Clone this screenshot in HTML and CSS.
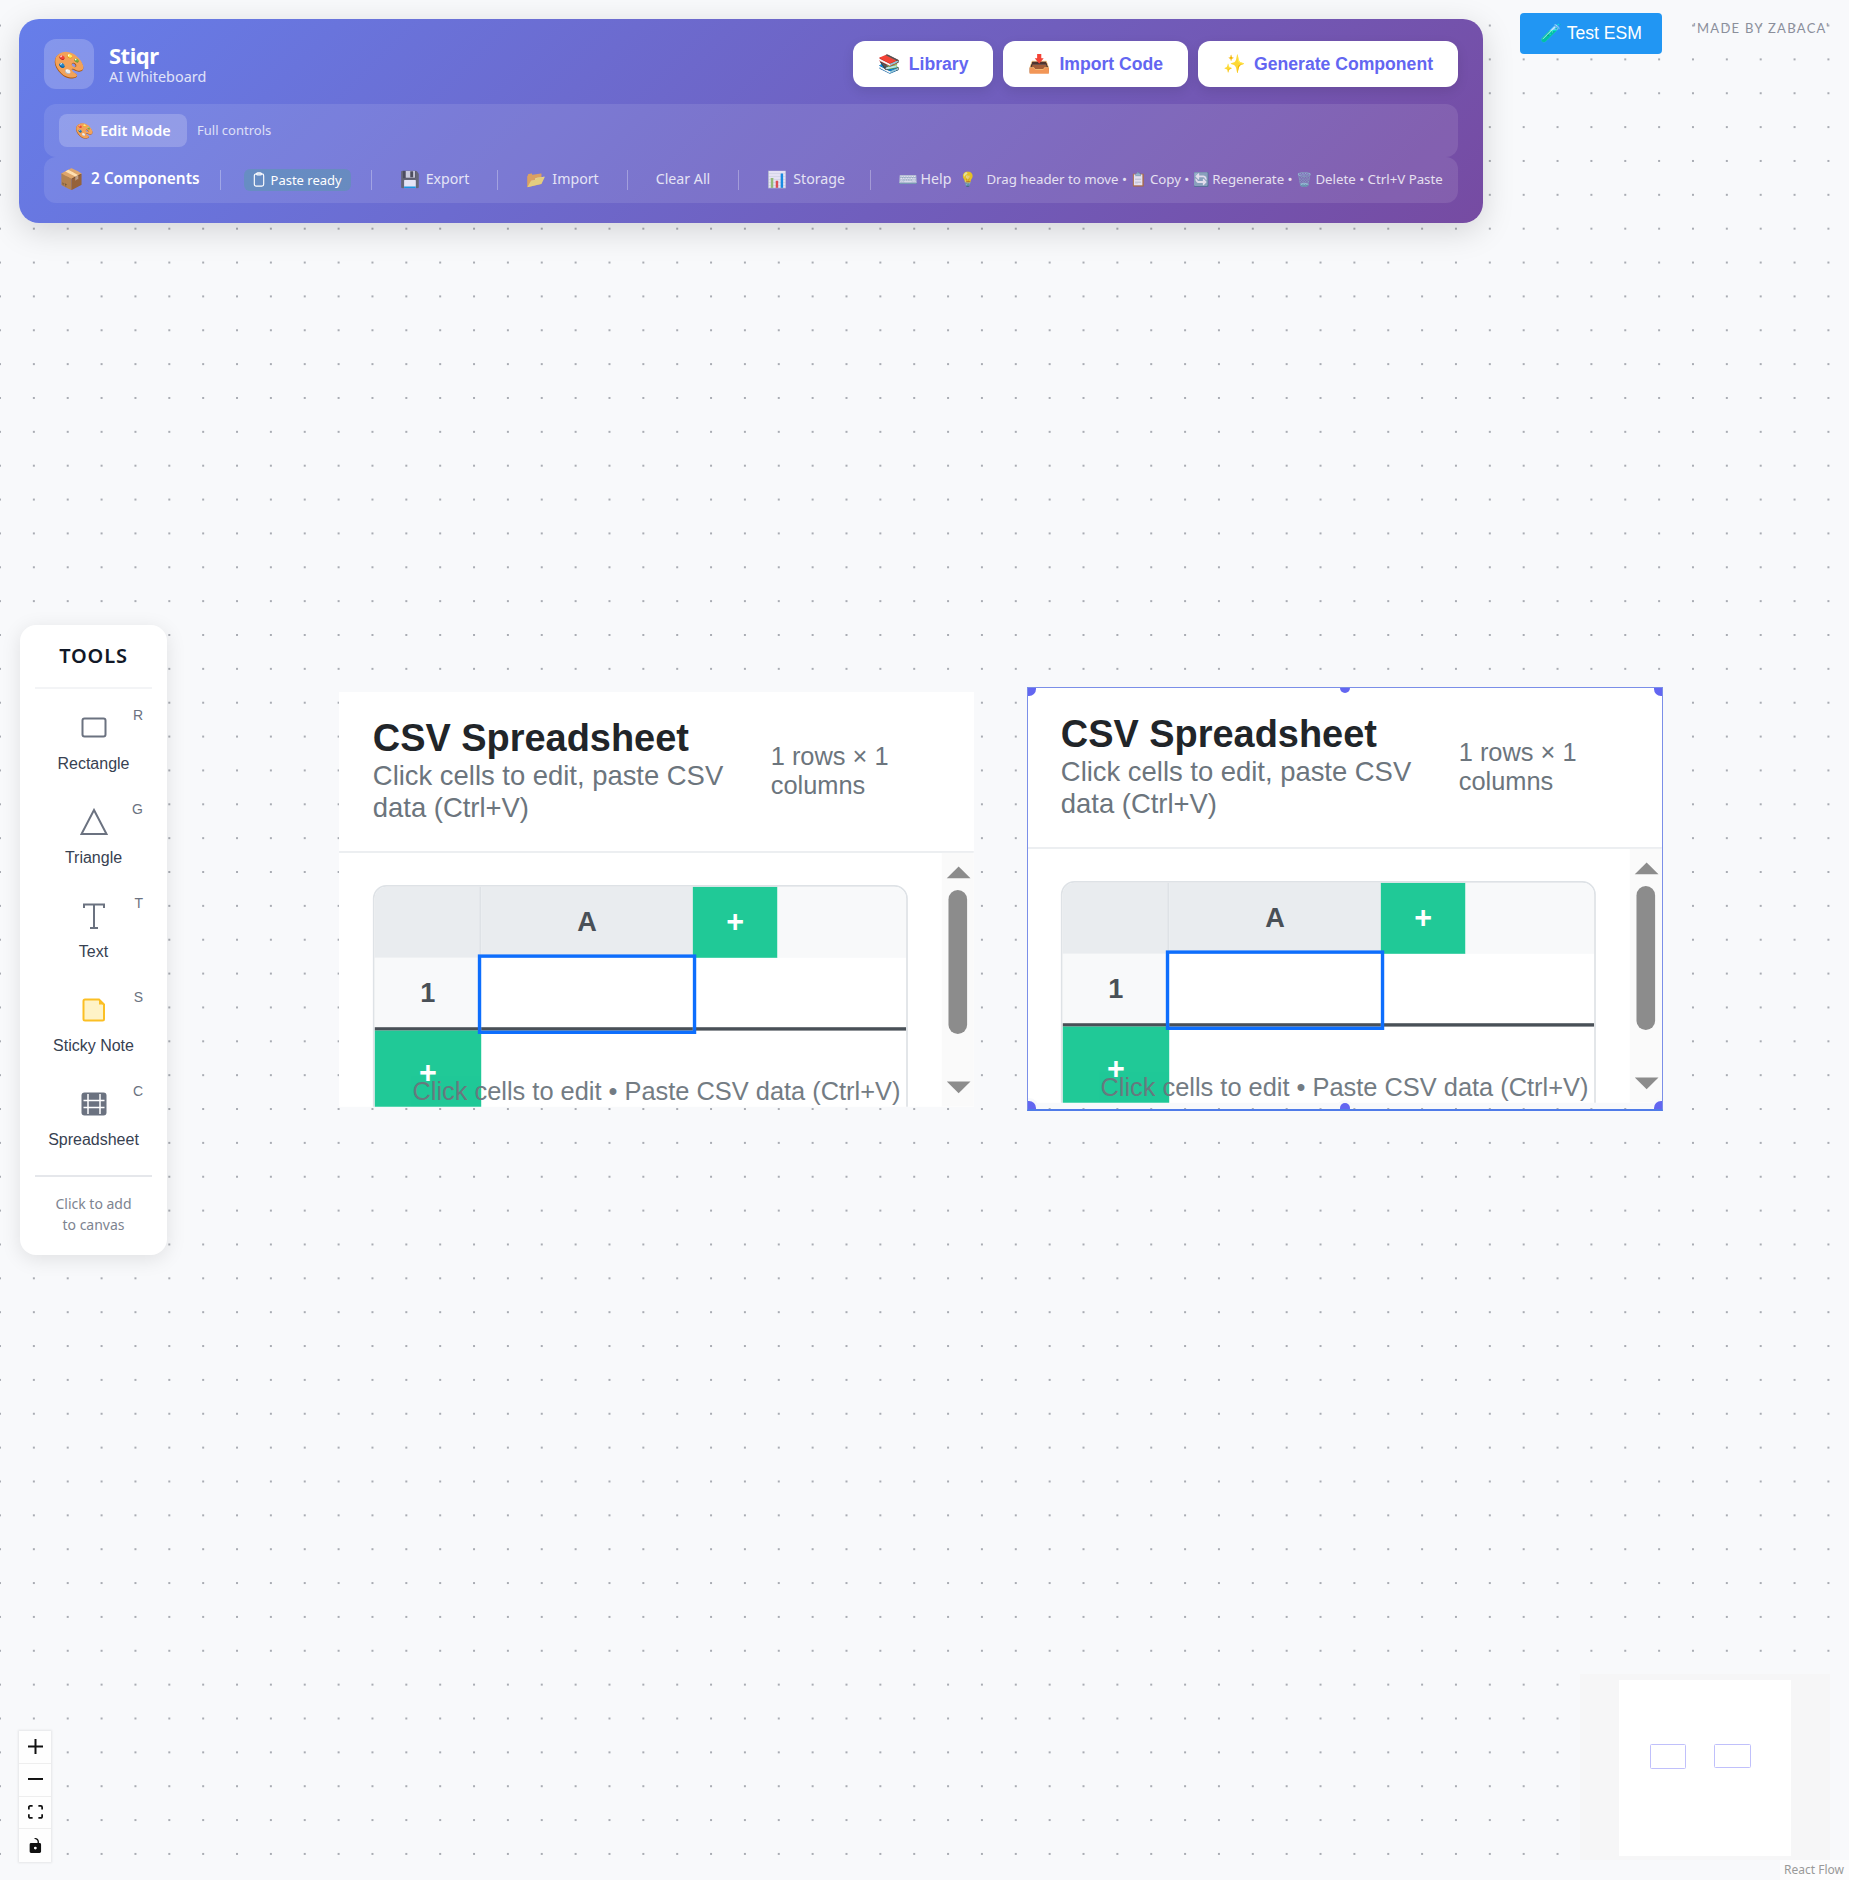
FILE: index.html
```html
<!DOCTYPE html>
<html lang="en">
<head>
  <meta charset="UTF-8" />
  <title>Stiqr - AI Whiteboard</title>
  <link rel="stylesheet" href="styles.css">
</head>
<body>
<div class="canvas">

  <header class="app-header">
    <div class="top-row">
      <div class="brand">
        <div class="logo">🎨</div>
        <div class="brand-text">
          <div class="brand-name">Stiqr</div>
          <div class="brand-sub">AI Whiteboard</div>
        </div>
      </div>
      <div class="actions">
        <button class="action"><span class="emoji">📚</span>Library</button>
        <button class="action"><span class="emoji">📥</span>Import Code</button>
        <button class="action"><span class="emoji">✨</span>Generate Component</button>
      </div>
    </div>
    <div class="mode-row">
      <span class="mode-pill"><span class="mode-emoji">🎨</span>Edit Mode</span>
      <span class="mode-note">Full controls</span>
    </div>
    <div class="status-row">
      <span class="count"><span class="count-emoji">📦</span>2 Components</span>
      <span class="sep"></span>
      <span class="paste-pill">
        <svg class="clip" viewBox="0 0 12 16"><rect x="1" y="2" width="10" height="13" rx="2"/><rect x="3.5" y="0.8" width="5" height="2.4" rx="1"/></svg>
        Paste ready
      </span>
      <span class="sep"></span>
      <span class="link"><span class="link-emoji">💾</span>Export</span>
      <span class="sep"></span>
      <span class="link"><span class="link-emoji">📂</span>Import</span>
      <span class="sep"></span>
      <span class="link">Clear All</span>
      <span class="sep"></span>
      <span class="link storage"><span class="link-emoji">📊</span>Storage</span>
      <span class="sep"></span>
      <span class="link help"><span class="link-emoji">⌨️</span>Help</span>
      <span class="tips"><span class="tip-bulb">💡</span>Drag header to move • 📋 Copy • 🔄 Regenerate • 🗑️ Delete • Ctrl+V Paste</span>
    </div>
  </header>

  <button class="test-esm">🧪 Test ESM</button>
  <div class="made-by">'MADE BY ZABACA'</div>

  <aside class="tools">
    <h3 class="tools-title">TOOLS</h3>
    <div class="tool">
      <svg class="tool-icon" viewBox="0 0 28 28"><rect x="2.5" y="4.5" width="23" height="18" rx="2"/></svg>
      <span class="tool-label">Rectangle</span><span class="hotkey">R</span>
    </div>
    <div class="tool">
      <svg class="tool-icon" viewBox="0 0 28 28"><path d="M14 2 L26.5 26 H1.5 Z"/></svg>
      <span class="tool-label">Triangle</span><span class="hotkey">G</span>
    </div>
    <div class="tool">
      <svg class="tool-icon" viewBox="0 0 28 28"><path d="M4 6V2.5H24V6M14 2.5V26M10 26H18"/></svg>
      <span class="tool-label">Text</span><span class="hotkey">T</span>
    </div>
    <div class="tool">
      <svg class="tool-icon sticky" viewBox="0 0 28 28"><path d="M5 3.5H19L24 8.5V23A1.5 1.5 0 0 1 22.500 24.500H5A1.500 1.500 0 0 1 3.500 23V5A1.500 1.500 0 0 1 5 3.500Z"/><path class="fold" d="M19 3.500L24 8.500H19Z"/></svg>
      <span class="tool-label">Sticky Note</span><span class="hotkey">S</span>
    </div>
    <div class="tool">
      <svg class="tool-icon grid-icon" viewBox="0 0 28 28"><rect x="1.500" y="2.500" width="25" height="23" rx="3"/><path d="M3.500 10.500H24.500M3.500 17.500H24.500M8 4V24M20 4V24"/></svg>
      <span class="tool-label">Spreadsheet</span><span class="hotkey">C</span>
    </div>
    <p class="tools-hint">Click to add<br>to canvas</p>
  </aside>

  <section class="node node-one">
    <div class="sheet-head">
      <div class="sheet-info">
        <h2>CSV Spreadsheet</h2>
        <p>Click cells to edit, paste CSV data (Ctrl+V)</p>
      </div>
      <div class="sheet-size">1 rows × 1 columns</div>
    </div>
    <div class="sheet-body">
      <div class="table">
        <div class="cell corner"></div>
        <div class="cell col-head">A</div>
        <div class="cell add">+</div>
        <div class="cell head-rest"></div>
        <div class="cell row-head">1</div>
        <div class="cell selected"></div>
        <div class="cell row-rest"></div>
        <div class="cell add add-row">+</div>
      </div>
      <div class="scrollbar"><i class="arrow-up"></i><b class="thumb"></b><i class="arrow-down"></i></div>
    </div>
    <div class="sheet-foot">Click cells to edit • Paste CSV data (Ctrl+V)</div>
  </section>

  <section class="node node-two">
    <div class="sheet-head">
      <div class="sheet-info">
        <h2>CSV Spreadsheet</h2>
        <p>Click cells to edit, paste CSV data (Ctrl+V)</p>
      </div>
      <div class="sheet-size">1 rows × 1 columns</div>
    </div>
    <div class="sheet-body">
      <div class="table">
        <div class="cell corner"></div>
        <div class="cell col-head">A</div>
        <div class="cell add">+</div>
        <div class="cell head-rest"></div>
        <div class="cell row-head">1</div>
        <div class="cell selected"></div>
        <div class="cell row-rest"></div>
        <div class="cell add add-row">+</div>
      </div>
      <div class="scrollbar"><i class="arrow-up"></i><b class="thumb"></b><i class="arrow-down"></i></div>
    </div>
    <div class="sheet-foot">Click cells to edit • Paste CSV data (Ctrl+V)</div>
  </section>

  <div class="selection">
    <i class="handle tl"></i><i class="handle tm"></i><i class="handle tr"></i>
    <i class="handle bl"></i><i class="handle bm"></i><i class="handle br"></i>
  </div>

  <div class="controls">
    <button class="ctrl"><svg viewBox="0 0 32 32"><path d="M32 18.133H18.133V32h-4.266V18.133H0v-4.266h13.867V0h4.266v13.867H32z"/></svg></button>
    <button class="ctrl"><svg viewBox="0 0 32 5"><path d="M0 0h32v4.200H0z"/></svg></button>
    <button class="ctrl"><svg viewBox="0 0 32 30"><path d="M3.692 4.630c0-.530.400-.938.939-.938h5.215V0H4.708C2.130 0 0 2.054 0 4.630v5.216h3.692V4.631zM27.354 0h-5.200v3.692h5.170c.530 0 .984.400.984.939v5.215H32V4.631A4.624 4.624 0 0027.354 0zm.954 24.830c0 .532-.400.940-.939.940h-5.215v3.768h5.215c2.577 0 4.631-2.130 4.631-4.707v-5.139h-3.692v5.139zm-23.677.940c-.531 0-.939-.400-.939-.940v-5.138H0v5.139c0 2.577 2.130 4.707 4.708 4.707h5.138V25.770H4.631z"/></svg></button>
    <button class="ctrl"><svg viewBox="0 0 25 32"><path d="M21.333 10.667H19.810V7.619C19.810 3.429 16.380 0 12.190 0c-4.114 0-1.370 2.133.305 2.438 1.676.305 4.420 2.590 4.420 5.181v3.048H3.047A3.056 3.056 0 000 13.714v15.238A3.056 3.056 0 003.048 32h18.285a3.056 3.056 0 003.048-3.048V13.714a3.056 3.056 0 00-3.048-3.047zM12.190 24.533a3.056 3.056 0 01-3.047-3.047 3.056 3.056 0 013.047-3.048 3.056 3.056 0 013.048 3.048 3.056 3.056 0 01-3.048 3.047z"/></svg></button>
  </div>

  <div class="minimap">
    <svg viewBox="0 0 250 186">
      <rect class="mask" x="39" y="6" width="172" height="176"/>
      <rect class="mini-node" x="70.500" y="70.500" width="35" height="24" rx="1"/>
      <rect class="mini-node" x="134.500" y="70.500" width="36" height="23" rx="1"/>
    </svg>
  </div>
  <div class="attribution">React Flow</div>

</div>
</body>
</html>
```

FILE: styles.css
```css
* { box-sizing: border-box; }
html, body { margin: 0; padding: 0; }
body { font-family: "Liberation Sans", Arial, sans-serif; background: #f8f9fb; }
button { font-family: "Liberation Sans", Arial, sans-serif; border: none; cursor: pointer; }

.canvas {
  position: relative;
  width: 1849px;
  height: 1880px;
  overflow: hidden;
  background-color: #f8f9fb;
  background-image: radial-gradient(circle, #a9acb3 1.1px, transparent 1.4px);
  background-size: 33.86px 33.86px;
  background-position: -16.93px 8.6px;
}

/* header */
.app-header {
  position: absolute;
  left: 19px;
  top: 19px;
  width: 1464px;
  height: 204px;
  padding: 20px 25px;
  border-radius: 20px;
  color: white;
  background: linear-gradient(135deg, #667eea 0%, #764ba2 100%);
  box-shadow: 0 8px 32px rgba(0,0,0,0.15);
  font-family: "Noto Sans", sans-serif;
}
.top-row { display: flex; justify-content: space-between; align-items: center; height: 50px; margin-bottom: 15px; }
.brand { display: flex; align-items: center; gap: 15px; }
.logo { width: 50px; height: 50px; border-radius: 12px; background: rgba(255,255,255,0.2); display: flex; align-items: center; justify-content: center; font-size: 26px; }
.brand-name { font-size: 22px; font-weight: 700; line-height: 26px; letter-spacing: -0.5px; margin-top: -2px; }
.brand-sub { font-size: 14.400px; line-height: 17px; opacity: 0.8; }
.actions { display: flex; gap: 10px; }
.action {
  height: 46px;
  padding: 0 25px;
  background: white;
  border-radius: 12px;
  color: #6366f1;
  font-size: 17.6px;
  font-weight: 700;
  box-shadow: 0 4px 12px rgba(0,0,0,0.1);
  display: flex;
  align-items: center;
}
.emoji { margin-right: 9px; font-size: 18px; }

.mode-row { height: 53px; display: flex; align-items: center; gap: 10px; padding: 0 15px 1px; background: rgba(255,255,255,0.1); border-radius: 12px; }
.mode-pill { height: 33px; width: 128px; display: flex; align-items: center; justify-content: center; border-radius: 8px; background: rgba(255,255,255,0.2); font-size: 14.400px; font-weight: 600; white-space: nowrap; }
.mode-emoji { margin-right: 6px; font-size: 15px; }
.mode-note { font-size: 13px; opacity: 0.75; }

.status-row { height: 46px; display: flex; align-items: center; padding: 0 15px 3px; background: rgba(255,255,255,0.1); border-radius: 12px; font-size: 14px; white-space: nowrap; }
.count { font-size: 15.400px; font-weight: 600; display: flex; align-items: center; }
.count-emoji { font-size: 20px; margin-right: 7px; }
.sep { width: 1px; height: 20px; background: rgba(255,255,255,0.3); margin: 3px 20px 0; }
.paste-pill { height: 22px; margin: 2px 0 0 3px; display: flex; align-items: center; gap: 6px; padding: 0 9px; border-radius: 6px; background: rgba(34,197,94,0.2); font-size: 13px; }
.clip { width: 12px; height: 15px; }
.clip rect { fill: none; stroke: white; stroke-width: 1.200; }
.link { display: flex; align-items: center; font-size: 14.200px; opacity: 0.8; margin: 0 8px; }
.link-emoji { font-size: 16px; margin-right: 6px; }
.storage { margin-right: 4.500px; }
.help { margin-right: 8px; margin-left: 7px; }
.help .link-emoji { margin-right: 3px; }
.tips { font-size: 13.250px; opacity: 0.8; }
.tip-bulb { font-size: 14px; margin-right: 10px; }

.test-esm { position: absolute; left: 1520px; top: 13px; width: 142px; height: 41px; background: #2196f3; color: white; border-radius: 4px; font-size: 17.600px; }
.made-by { position: absolute; left: 1693px; top: 20px; font-family: "Lato", sans-serif; font-size: 13px; letter-spacing: 1.300px; color: #8b8f9b; white-space: nowrap; }

/* tools panel */
.tools {
  position: absolute;
  left: 20px;
  top: 625px;
  width: 147px;
  height: 630px;
  padding: 0 15px;
  background: white;
  border-radius: 16px;
  box-shadow: 0 4px 20px rgba(0,0,0,0.1);
}
.tools-title { margin: 0; height: 64px; padding-top: 19px; border-bottom: 2px solid #f3f4f6; text-align: center; font-family: "Noto Sans", sans-serif; font-size: 20px; font-weight: 600; line-height: 24px; letter-spacing: 0.8px; color: #111827; }
.tool { position: relative; height: 94px; display: flex; flex-direction: column; align-items: center; padding-top: 25px; }
.tool-icon { width: 28px; height: 28px; fill: none; stroke: #6b7280; stroke-width: 2; flex: none; }
.tool-label { margin-top: 13px; font-size: 16px; line-height: 18px; color: #374151; white-space: nowrap; }
.hotkey { position: absolute; right: 9px; top: 18px; font-size: 14px; color: #6b7280; }
.sticky { fill: #fef3c7; stroke: #fbbf24; }
.fold { fill: #fbbf24; stroke: none; }
.grid-icon rect { fill: #6b7280; stroke: none; }
.grid-icon path { stroke: white; stroke-width: 1.500; }
.tools-hint { margin: 16px 0 0; padding-top: 16px; border-top: 2px solid #e5e7eb; text-align: center; font-family: "Noto Sans", sans-serif; font-size: 14px; line-height: 21px; color: #7d8490; }

/* spreadsheet nodes, drawn at the canvas zoom */
.node {
  position: absolute;
  width: 375px;
  height: 245px;
  overflow: hidden;
  background: white;
  transform: scale(1.693);
  transform-origin: 0 0;
}
.node-one { left: 339px; top: 692px; }
.node-two { left: 1027px; top: 688px; }
.sheet-head { display: flex; height: 95px; padding: 15px 20px 0; border-bottom: 1px solid #e9ecef; }
.sheet-info { width: 235px; flex: none; }
.sheet-info h2 { margin: 0; font-size: 22.400px; line-height: 25px; color: #212529; }
.sheet-info p { margin: 0; width: 215px; font-size: 16.200px; line-height: 19px; color: #6c757d; }
.sheet-size { width: 100px; padding-top: 14px; font-size: 15px; line-height: 17px; color: #6c757d; }
.sheet-body { position: relative; height: 150px; padding: 19px 0 0 20px; }
.table {
  display: grid;
  grid-template-columns: 63px 125px 50px 1fr;
  grid-template-rows: 42px 43px 60px;
  width: 316px;
  height: 150px;
  border: 1px solid #dee2e6;
  border-radius: 8px;
  overflow: hidden;
}
.cell { display: flex; align-items: center; justify-content: center; font-size: 16px; font-weight: 700; color: #495057; }
.corner, .col-head { background: #e9ecef; border-right: 1px solid #dee2e6; }
.col-head { border-right: none; }
.add { background: #20c997; color: white; font-size: 18px; }
.head-rest { background: #f8f9fa; }
.row-head { background: #f8f9fa; border-bottom: 2px solid #495057; }
.selected { border-bottom: 2px solid #495057; outline: 2px solid #0d6efd; outline-offset: -0.800px; z-index: 1; }
.row-rest { grid-column: span 2; border-bottom: 2px solid #495057; }
.add-row { height: 60px; padding-bottom: 10px; }
.scrollbar { position: absolute; right: 0; top: 0; width: 19px; height: 150px; background: #fafafa; }
.arrow-up, .arrow-down { position: absolute; left: 2.500px; width: 0; height: 0; border-left: 7px solid transparent; border-right: 7px solid transparent; }
.arrow-up { top: 8px; border-bottom: 7px solid #8c8c8c; }
.arrow-down { top: 135px; border-top: 7px solid #8c8c8c; }
.thumb { position: absolute; left: 4px; top: 22px; width: 11px; height: 85px; border-radius: 5.500px; background: #8c8c8c; }
.sheet-foot { position: absolute; left: 0; right: 0; bottom: 0; text-align: center; font-size: 15px; line-height: 18px; color: #6c757d; white-space: nowrap; opacity: 0.95; }

/* resizer frame around the selected node */
.selection { position: absolute; left: 1027px; top: 687px; width: 636px; height: 424px; overflow: hidden; border: 1px solid #7b8fe8; border-bottom: 2px solid #4f7be8; }
.handle { position: absolute; width: 14px; height: 14px; border-radius: 50%; background: #6366f1; }
.tl { left: -6px; top: -6px; }
.tr { right: -6px; top: -6px; }
.tm { left: 312px; top: -5px; width: 10px; height: 10px; }
.bl { left: -6px; bottom: -6px; box-shadow: 0 0 0 3px #f8f9fb; }
.br { right: -6px; bottom: -6px; box-shadow: 0 0 0 3px #f8f9fb; }
.bm { left: 312px; bottom: -4px; width: 10px; height: 10px; box-shadow: 0 0 0 3px #f8f9fb; }

/* zoom controls */
.controls { position: absolute; left: 19px; top: 1731px; width: 32px; box-shadow: 0 0 2px 1px rgba(0,0,0,0.08); }
.ctrl { display: flex; align-items: center; justify-content: center; width: 32px; height: 32.750px; padding: 0; background: #fefefe; border-bottom: 1px solid #eeeeee; }
.ctrl:last-child { border-bottom: none; }
.ctrl svg { width: 15px; max-height: 15px; fill: #111; }

/* minimap */
.minimap { position: absolute; left: 1580px; top: 1674px; width: 250px; height: 186px; }
.minimap svg { display: block; width: 250px; height: 186px; background: #f6f6f7; }
.mask { fill: white; }
.mini-node { fill: white; stroke: #c0c0fb; stroke-width: 1; }
.attribution { position: absolute; right: 0; bottom: 0; width: 69px; height: 20px; padding-left: 4px; background: rgba(255,255,255,0.5); font-family: "Noto Sans", sans-serif; font-size: 12px; line-height: 20px; color: #999; white-space: nowrap; }
```
